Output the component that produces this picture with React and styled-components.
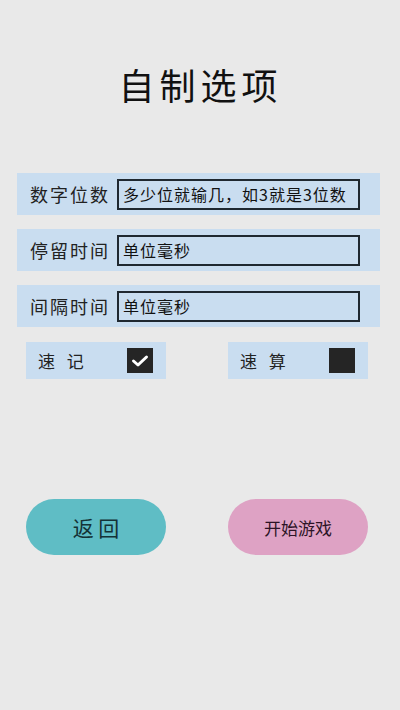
import React, { useState } from "react";
import styled, { createGlobalStyle } from "styled-components";

const GlobalStyle = createGlobalStyle`
    html, body {
        margin: 0;
        padding: 0;
        background: #e9e9e9;
    }
    body {
        font-family: "Noto Sans CJK SC", "Noto Sans", sans-serif;
        color: #1c1c1c;
    }
`;

const Page = styled.div`
    width: 400px;
    min-height: 710px;
    display: flex;
    flex-direction: column;
    box-sizing: border-box;
    padding: 64px 20px 0 17px;
`;

const Title = styled.h1`
    margin: 0 0 69px;
    padding-left: 4px;
    text-align: center;
    font-size: 36px;
    line-height: 40px;
    font-weight: 400;
    letter-spacing: 5px;
    color: #111;
`;

const Form = styled.div`
    display: flex;
    flex-direction: column;
    gap: 14px;
`;

const Field = styled.label`
    display: flex;
    align-items: center;
    height: 42px;
    padding: 0 20px 0 13px;
    background: #c9ddf0;
    box-sizing: border-box;
`;

const Label = styled.span`
    width: 87px;
    flex-shrink: 0;
    font-size: 18px;
    letter-spacing: 2px;
    color: #222;
`;

const Input = styled.input`
    flex: 1;
    min-width: 0;
    height: 31px;
    box-sizing: border-box;
    border: 2px solid #1f2830;
    background: transparent;
    padding: 0 4px;
    font-family: inherit;
    font-size: 16px;
    letter-spacing: 1px;
    color: #111;
    outline: none;
    &::placeholder {
        color: #111;
        opacity: 1;
    }
`;

const Toggles = styled.div`
    display: flex;
    justify-content: space-between;
    padding: 1px 12px 0 9px;
`;

const Toggle = styled.label`
    width: 140px;
    height: 37px;
    display: flex;
    align-items: center;
    justify-content: space-between;
    padding: 0 13px 0 12px;
    box-sizing: border-box;
    background: #c9ddf0;
    cursor: pointer;
`;

const ToggleText = styled.span`
    font-size: 17px;
    letter-spacing: 4px;
    color: #222;
    white-space: pre;
`;

const Box = styled.span`
    width: 26px;
    height: 25px;
    background: #252525;
    display: grid;
    place-items: center;
`;

const Buttons = styled.div`
    display: flex;
    justify-content: space-between;
    margin-top: 120px;
    padding: 0 12px 0 9px;
`;

const Pill = styled.button`
    width: 140px;
    height: 56px;
    border: none;
    border-radius: 28px;
    background: ${(p) => p.$bg};
    color: ${(p) => p.$fg};
    font-family: inherit;
    font-size: ${(p) => p.$size}px;
    white-space: pre;
    cursor: pointer;
`;

const CheckBox = ({ checked, onClick }) => (
    <Box onClick={onClick}>
        {checked && (
            <svg width="18" height="14" viewBox="0 0 18 14">
                <polyline
                    points="2.5,7 7,11 15.5,3"
                    fill="none"
                    stroke="#fff"
                    strokeWidth="3"
                    strokeLinecap="round"
                    strokeLinejoin="round"
                />
            </svg>
        )}
    </Box>
);

const App = () => {
    const [memo, setMemo] = useState(true);
    const [calc, setCalc] = useState(false);
    return (
        <>
            <GlobalStyle />
            <Page>
                <Title>自制选项</Title>
                <Form>
                    <Field>
                        <Label>数字位数</Label>
                        <Input placeholder="多少位就输几，如3就是3位数" />
                    </Field>
                    <Field>
                        <Label>停留时间</Label>
                        <Input placeholder="单位毫秒" />
                    </Field>
                    <Field>
                        <Label>间隔时间</Label>
                        <Input placeholder="单位毫秒" />
                    </Field>
                    <Toggles>
                        <Toggle>
                            <ToggleText>速 记</ToggleText>
                            <CheckBox checked={memo} onClick={() => setMemo(!memo)} />
                        </Toggle>
                        <Toggle>
                            <ToggleText>速 算</ToggleText>
                            <CheckBox checked={calc} onClick={() => setCalc(!calc)} />
                        </Toggle>
                    </Toggles>
                </Form>
                <Buttons>
                    <Pill $bg="#5fbdc5" $fg="#143236" $size={21}>
                        返 回
                    </Pill>
                    <Pill $bg="#dea2c4" $fg="#2c1426" $size={17}>
                        开始游戏
                    </Pill>
                </Buttons>
            </Page>
        </>
    );
};

export default App;
